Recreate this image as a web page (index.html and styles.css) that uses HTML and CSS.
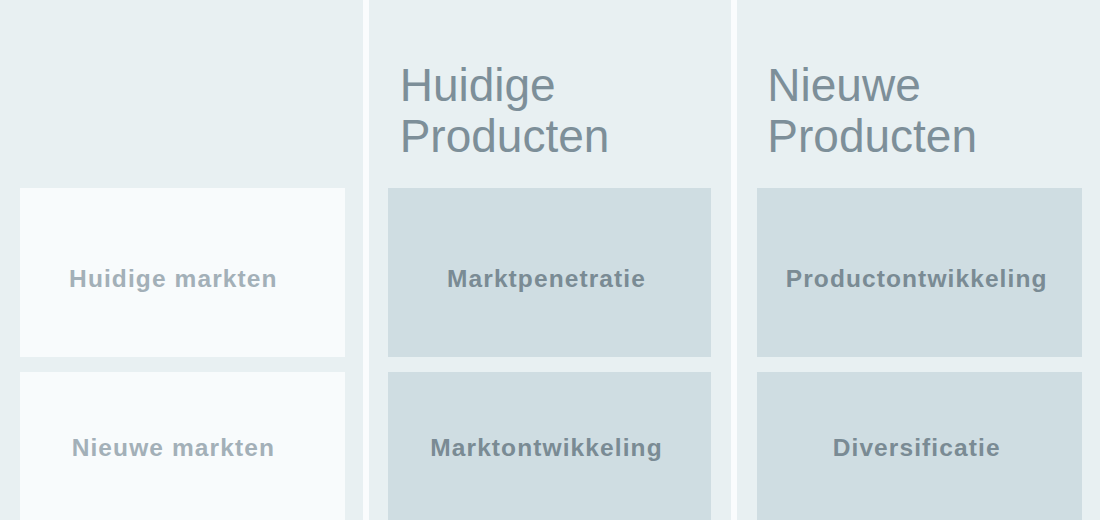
FILE: index.html
```html
<!DOCTYPE html>
<html lang="nl">
<head>
<meta charset="utf-8">
<title>Ansoff-matrix</title>
<link rel="stylesheet" href="styles.css">
</head>
<body>
<div class="matrix">
  <div class="col col-first">
    <div class="head"></div>
    <div class="card card-top card-light"><span>Huidige markten</span></div>
    <div class="card card-bottom card-light"><span>Nieuwe markten</span></div>
  </div>
  <div class="col col-mid">
    <div class="head"><h2>Huidige<br>Producten</h2></div>
    <div class="card card-top card-dark"><span>Marktpenetratie</span></div>
    <div class="card card-bottom card-dark"><span>Marktontwikkeling</span></div>
  </div>
  <div class="col col-last">
    <div class="head"><h2>Nieuwe<br>Producten</h2></div>
    <div class="card card-top card-dark"><span>Productontwikkeling</span></div>
    <div class="card card-bottom card-dark"><span>Diversificatie</span></div>
  </div>
</div>
</body>
</html>
```

FILE: styles.css
```css
* { box-sizing: border-box; }
html, body {
  margin: 0;
  padding: 0;
  height: 520px;
  overflow: hidden;
  background: #fafcfd;
  font-family: "Liberation Sans", Arial, sans-serif;
}
.matrix {
  display: grid;
  grid-template-columns: 1fr 1fr 1fr;
  column-gap: 6px;
  height: 520px;
}
.col {
  background: #e8f0f2;
  padding: 0 18px 0 20px;
  display: flex;
  flex-direction: column;
  gap: 15px;
  overflow: hidden;
}
.col-mid {
  padding: 0 20px 0 19px;
}
.head {
  height: 173px;
  flex: none;
  padding: 60px 0 0 12px;
}
.col-last .head {
  padding-left: 10px;
}
.head h2 {
  margin: 0;
  font-size: 46px;
  line-height: 51px;
  font-weight: normal;
  color: #7d8f99;
}
.card {
  flex: none;
  display: flex;
  align-items: center;
  justify-content: center;
  font-weight: bold;
  font-size: 24.5px;
  letter-spacing: 1.1px;
}
.card-top {
  height: 169px;
  padding-top: 13px;
}
.card-bottom {
  height: 152px;
}
.card-light {
  background: #f8fbfc;
  color: #a3b0b8;
  padding-right: 18px;
}
.card-dark {
  background: #cfdde2;
  color: #7a8b94;
  padding-right: 6px;
}
```
